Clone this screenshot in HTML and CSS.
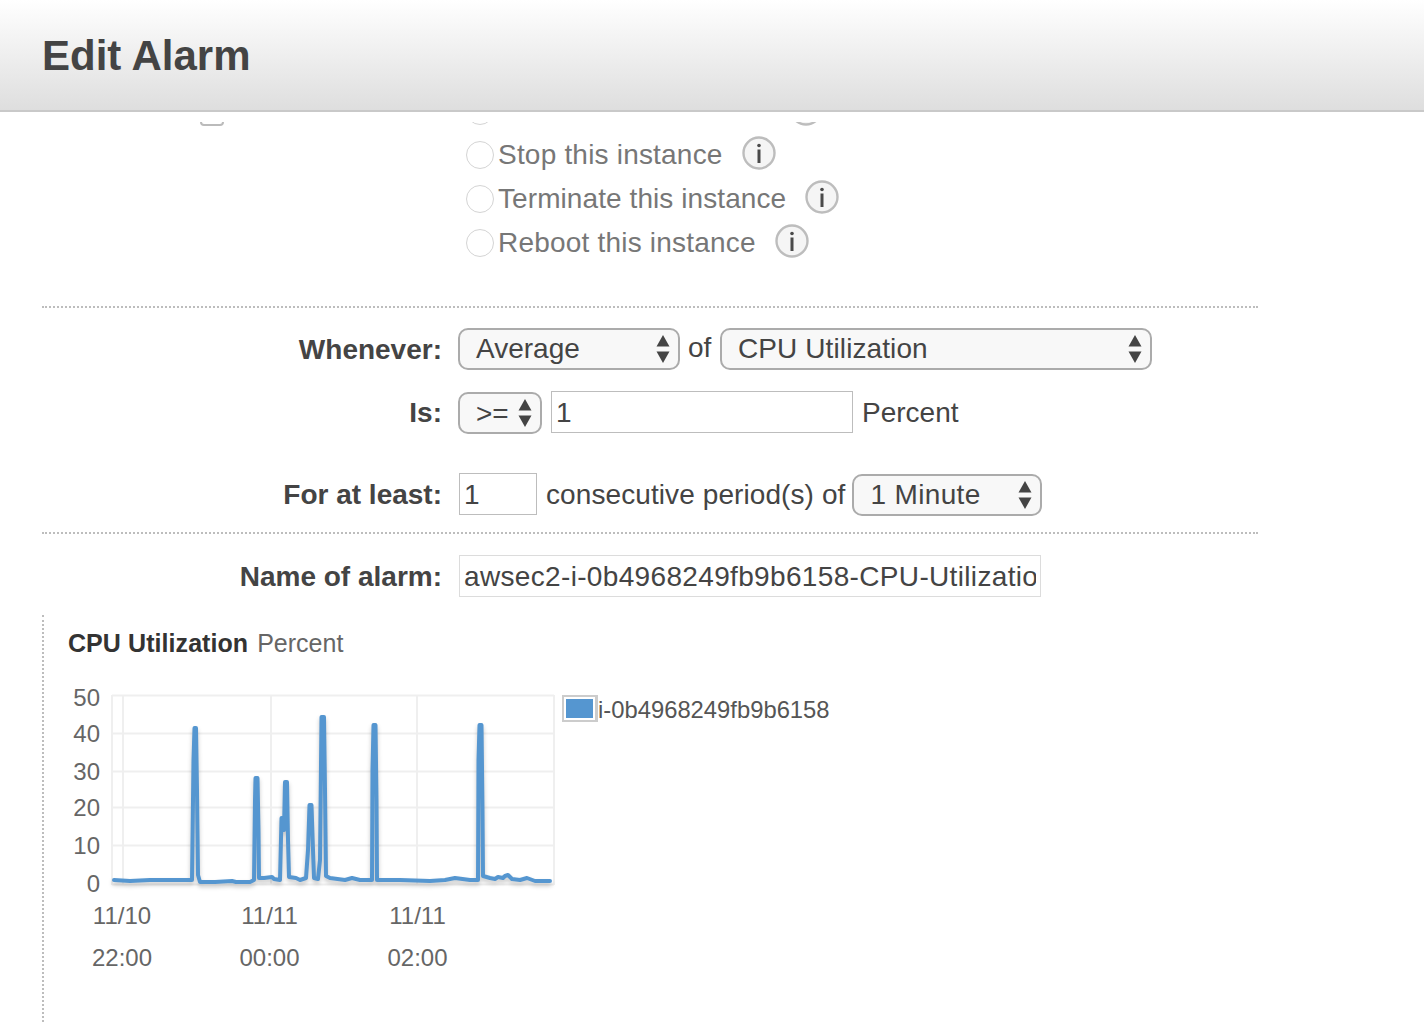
FILE: index.html
```html
<!DOCTYPE html>
<html lang="en">
<head>
<meta charset="utf-8">
<title>Edit Alarm</title>
<link rel="stylesheet" href="styles.css">
</head>
<body>
<header class="dialog-header"><h1>Edit Alarm</h1></header>
<main class="pane">
  <div class="pane-clip">
    <form class="pane-inner">
      <div class="row action-row">
        <div class="label action-label"><input class="check" type="checkbox" disabled><span class="action-text">Take the action:</span></div>
        <ul class="actions">
          <li><input class="radio" type="radio" disabled><span>Recover this instance</span><svg class="info" viewBox="0 0 34 34"><circle cx="17" cy="17" r="15.5"/><rect x="15.5" y="13.5" width="3" height="13.5"/><circle class="dot" cx="17" cy="9.5" r="1.8"/></svg></li>
          <li><input class="radio" type="radio" disabled><span>Stop this instance</span><svg class="info" viewBox="0 0 34 34"><circle cx="17" cy="17" r="15.5"/><rect x="15.5" y="13.5" width="3" height="13.5"/><circle class="dot" cx="17" cy="9.5" r="1.8"/></svg></li>
          <li><input class="radio" type="radio" disabled><span class="tight">Terminate this instance</span><svg class="info" viewBox="0 0 34 34"><circle cx="17" cy="17" r="15.5"/><rect x="15.5" y="13.5" width="3" height="13.5"/><circle class="dot" cx="17" cy="9.5" r="1.8"/></svg></li>
          <li><input class="radio" type="radio" disabled><span>Reboot this instance</span><svg class="info" viewBox="0 0 34 34"><circle cx="17" cy="17" r="15.5"/><rect x="15.5" y="13.5" width="3" height="13.5"/><circle class="dot" cx="17" cy="9.5" r="1.8"/></svg></li>
        </ul>
      </div>

      <hr class="rule rule-top">

      <div class="row">
        <div class="label">Whenever:</div>
        <div class="controls">
          <div class="select w-average">Average<svg class="arrows" viewBox="0 0 14 28"><path d="M7 0 13.5 11.5H.5Z"/><path d="M7 28 .5 16.5H13.5Z"/></svg></div>
          <span class="word of">of</span>
          <div class="select w-metric">CPU Utilization<svg class="arrows" viewBox="0 0 14 28"><path d="M7 0 13.5 11.5H.5Z"/><path d="M7 28 .5 16.5H13.5Z"/></svg></div>
        </div>
      </div>

      <div class="row row-is">
        <div class="label">Is:</div>
        <div class="controls">
          <div class="select w-op nudge">&gt;=<svg class="arrows" viewBox="0 0 14 28"><path d="M7 0 13.5 11.5H.5Z"/><path d="M7 28 .5 16.5H13.5Z"/></svg></div>
          <input class="field w-threshold" type="text" value="1">
          <span class="word percent">Percent</span>
        </div>
      </div>

      <div class="row row-period">
        <div class="label">For at least:</div>
        <div class="controls">
          <input class="field w-count offset" type="text" value="1">
          <span class="word consecutive">consecutive period(s) of</span>
          <div class="select w-minute nudge">1 Minute<svg class="arrows" viewBox="0 0 14 28"><path d="M7 0 13.5 11.5H.5Z"/><path d="M7 28 .5 16.5H13.5Z"/></svg></div>
        </div>
      </div>

      <hr class="rule rule-bottom">

      <div class="row row-name">
        <div class="label">Name of alarm:</div>
        <div class="controls">
          <input class="field field-light w-name offset" type="text" value="awsec2-i-0b4968249fb9b6158-CPU-Utilization">
        </div>
      </div>

      <section class="chart-block">
        <h2 class="chart-title"><b>CPU Utilization</b> Percent</h2>
        <div class="chart-body">
          <svg class="chart" viewBox="68 680 490 300" aria-label="CPU Utilization chart">
            <g class="grid">
              <path d="M112 695.5H554M112 733.5H554M112 771.5H554M112 807.5H554M112 845.5H554M112 884.5H554"/>
              <path d="M112 695V885M123 695V885M271 695V885M417 695V885M554 695V885"/>
            </g>
            <polyline class="series" points="114,880 130,881 150,880 170,880 192,880 193.5,760 194.5,728 196,728 197,790 198,875 200,882 215,882 232,881 236,882 250,882 254,880 255,800 255.5,778 257.5,778 258.5,830 259,878 264,878 272,877 274,879 280,880 281.5,818 283,818 284,830 285,782 287,782 288,840 289,877 296,878 300,880 306,878 308,850 309.5,805 311.5,805 313,850 314,878 318,879 320,860 321.5,717 324,717 325,790 326,876 330,878 345,880 352,878 360,880 372,880 372.5,770 373.5,725 375.5,725 376.5,800 377,880 400,880 430,881 445,880 455,878 470,880 478,880 478.5,760 479.5,725 481.5,725 482.5,810 483,876 490,878 495,879 498,877 503,878 505,876 508,875 512,879 520,880 527,878 535,881 550,881"/>
            <g class="ticks y-ticks">
              <text x="100" y="706">50</text>
              <text x="100" y="742">40</text>
              <text x="100" y="780">30</text>
              <text x="100" y="816">20</text>
              <text x="100" y="854">10</text>
              <text x="100" y="892">0</text>
            </g>
            <g class="ticks x-ticks">
              <text x="122" y="924">11/10</text>
              <text x="122" y="966">22:00</text>
              <text x="269.5" y="924">11/11</text>
              <text x="269.5" y="966">00:00</text>
              <text x="417.5" y="924">11/11</text>
              <text x="417.5" y="966">02:00</text>
            </g>
          </svg>
          <div class="legend"><span class="swatch"></span><span class="legend-text">i-0b4968249fb9b6158</span></div>
        </div>
      </section>
    </form>
  </div>
</main>
</body>
</html>
```
FILE: styles.css
```css
* { box-sizing: border-box; }
html, body { margin: 0; height: 100%; }
body {
  width: 1424px;
  height: 1030px;
  overflow: hidden;
  background: #fff;
  color: #444;
  font-family: "Liberation Sans", Arial, sans-serif;
  font-size: 28px;
  display: flex;
  flex-direction: column;
}

.dialog-header {
  flex: none;
  height: 112px;
  padding: 32px 0 0 42px;
  background: linear-gradient(#ffffff, #dedede);
  border-bottom: 2px solid #c9c9c9;
}
.dialog-header h1 {
  margin: 0;
  font-size: 42px;
  line-height: 48px;
  font-weight: 700;
  color: #444;
}

.pane { flex: 1; padding-top: 10px; min-height: 0; display: flex; }
.pane-clip { flex: 1; overflow: hidden; }
.pane-inner { margin: -34px 0 0 42px; width: 1216px; }

.row { display: grid; grid-template-columns: 400px 1fr; column-gap: 16px; align-items: start; }
.label {
  height: 42px;
  padding-top: 1px;
  line-height: 42px;
  text-align: right;
  font-weight: 700;
  color: #444;
}
.controls { display: flex; align-items: flex-start; }

.action-label { display: flex; justify-content: flex-end; align-items: flex-start; gap: 7px; height: 44px; padding-top: 0; line-height: 44px; }
.action-text { padding-top: 3px; }
.check {
  appearance: none;
  margin: 14px 0 0;
  width: 24px;
  height: 24px;
  border: 2px solid #bbb;
  border-radius: 4px;
  background: #fff;
}
.actions { list-style: none; margin: 0; padding: 0 0 0 8px; color: #777; letter-spacing: 0.2px; }
.actions li { display: flex; align-items: center; height: 44px; }
.actions span { margin-top: 2px; }
.actions .tight { letter-spacing: 0.08px; }
.radio {
  appearance: none;
  flex: none;
  margin: 2px 4px 0 0;
  width: 28px;
  height: 28px;
  border: 1px solid #d4d4d4;
  border-radius: 50%;
  background: #fff;
}
.info { flex: none; width: 34px; height: 34px; margin: -2px 0 0 19px; }
.info circle { fill: #f5f5f5; stroke: #bdbdbd; stroke-width: 2.4; }
.info rect { fill: #4a4a4a; }
.info .dot { fill: #4a4a4a; stroke: none; }

.rule { border: 0; border-top: 2px dotted #bdbdbd; height: 0; margin: 0; }
.rule-top { margin: 42px 0 20px; }
.rule-bottom { margin: 16px 0 21px; }

.select {
  position: relative;
  flex: none;
  height: 42px;
  padding-left: 16px;
  line-height: 37px;
  border: 2px solid #ababab;
  border-radius: 10px;
  background: #f8f8f8;
  color: #444;
}
.arrows { position: absolute; right: 8px; top: 5px; width: 14px; height: 28px; fill: #444; }
.nudge { margin-top: 1px; }
.w-average { width: 222px; }
.w-metric { width: 432px; letter-spacing: 0.1px; }
.w-op { width: 84px; line-height: 39px; }
.w-minute { width: 190px; letter-spacing: 0.35px; }

.word { flex: none; line-height: 40px; color: #444; }
.of { margin: 0 8px 0 8px; width: 24px; }
.percent { margin-left: 9px; height: 42px; line-height: 44px; }
.consecutive { margin: 0 7px 0 9px; height: 42px; line-height: 44px; letter-spacing: 0.09px; }

.field {
  flex: none;
  height: 42px;
  padding: 2px 0 0 4px;
  border: 1px solid #bdbdbd;
  border-radius: 0;
  background: #fff;
  color: #444;
  font: inherit;
  outline: 0;
}
.field-light { border-color: #dcdcdc; padding: 2px 4px 0; letter-spacing: 0.34px; }
.offset { margin-left: 1px; }
.w-threshold { width: 302px; margin-left: 9px; }
.w-count { width: 78px; }
.w-name { width: 582px; }

.row-is { margin-top: 21px; }
.row-period { margin-top: 39px; }

.chart-block {
  margin: 18px 0 0 0;
  height: 407px;
  padding: 12px 0 0 24px;
  border-left: 2px dotted #bdbdbd;
  color: #666;
}
.chart-title { margin: 0; font-size: 25px; line-height: 32px; font-weight: 400; color: #666; }
.chart-title b { font-weight: 700; color: #333; margin-right: 2px; letter-spacing: 0.07px; }
.chart-body { display: flex; align-items: flex-start; margin-top: 21px; }
.chart { flex: none; width: 490px; height: 300px; }
.grid path { fill: none; stroke: #efefef; stroke-width: 2; }
.series {
  fill: none;
  stroke: #5596d0;
  stroke-width: 4;
  stroke-linejoin: round;
  stroke-linecap: round;
  filter: blur(0.4px) drop-shadow(0 3px 2px rgba(0, 0, 0, 0.22));
}
.ticks text { font-size: 24px; fill: #666; font-family: "Liberation Sans", Arial, sans-serif; }
.y-ticks text { text-anchor: end; }
.x-ticks text { text-anchor: middle; }

.legend { display: flex; align-items: flex-start; margin: 15px 0 0 4px; font-size: 23.8px; line-height: 27px; color: #555; }
.legend-text { padding-top: 1px; }
.swatch { flex: none; width: 36px; height: 27px; border: 2px solid #ccc; border-right-width: 3px; background: #5596d0; box-shadow: inset 0 0 0 2px #fff; }
```
